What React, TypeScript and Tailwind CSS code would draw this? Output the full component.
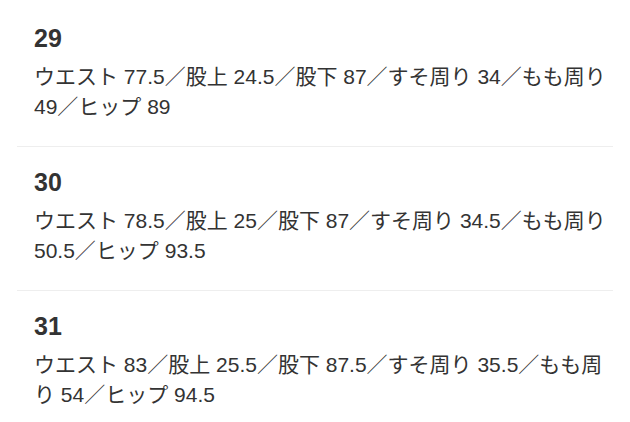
const sizes = [
  {
    size: "29",
    detail: "ウエスト 77.5／股上 24.5／股下 87／すそ周り 34／もも周り 49／ヒップ 89",
  },
  {
    size: "30",
    detail: "ウエスト 78.5／股上 25／股下 87／すそ周り 34.5／もも周り 50.5／ヒップ 93.5",
  },
  {
    size: "31",
    detail: "ウエスト 83／股上 25.5／股下 87.5／すそ周り 35.5／もも周り 54／ヒップ 94.5",
  },
];

export default function App() {
  return (
    <div
      className="min-h-screen bg-white px-[17px] pt-[3px] text-[#333]"
      style={{ fontFamily: '"Liberation Sans", "Noto Sans CJK JP", sans-serif' }}
    >
      {sizes.map((s) => (
        <div key={s.size} className="border-b border-[#eeeeee] pt-[19px] pb-[24px] pl-[17px] pr-[4px]">
          <p className="text-[25px] font-bold leading-[32px]">{s.size}</p>
          <p className="mt-[8px] text-[21px] leading-[30px]">{s.detail}</p>
        </div>
      ))}
    </div>
  );
}
